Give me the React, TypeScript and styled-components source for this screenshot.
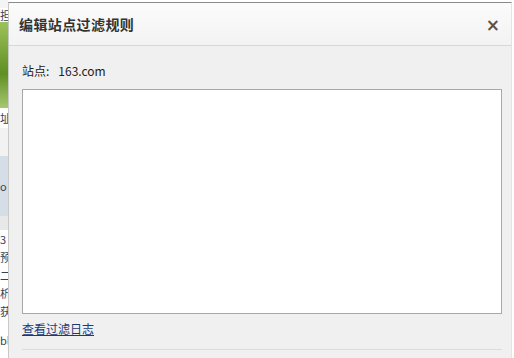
import React from "react";
import styled, { createGlobalStyle } from "styled-components";

const Global = createGlobalStyle`
  html, body { margin: 0; padding: 0; background: #ffffff; }
  body { width: 514px; height: 358px; overflow: hidden; font-family: "Noto Sans CJK SC", "Liberation Sans", sans-serif; }
`;

const Page = styled.div`
  display: flex;
  width: 514px;
  height: 358px;
  overflow: hidden;
`;

const Backdrop = styled.div`
  width: 8px;
  flex: none;
  display: flex;
  flex-direction: column;
  background: #ffffff;
`;

const BgBlock = styled.div<{ $h: number; $bg: string }>`
  flex: none;
  height: ${(p) => p.$h}px;
  background: ${(p) => p.$bg};
  font-size: 11px;
  line-height: ${(p) => p.$h}px;
  color: #345;
  overflow: hidden;
  white-space: nowrap;
`;

const Dialog = styled.div`
  width: 504px;
  margin-top: 2px;
  display: flex;
  flex-direction: column;
  background: #f0f0f0;
  border-top: 1px solid #8a8a8a;
  border-left: 1px solid #c8c8c8;
  border-right: 1px solid #e4e4e4;
  box-sizing: border-box;
`;

const Header = styled.div`
  flex: none;
  height: 43px;
  display: flex;
  align-items: center;
  justify-content: space-between;
  padding: 0 11px 0 10px;
  background: linear-gradient(#fbfbfb, #f3f3f3);
  border-bottom: 1px solid #d6d6d6;
  box-sizing: border-box;
`;

const Title = styled.div`
  font-size: 14px;
  font-weight: bold;
  color: #333;
  letter-spacing: 0.4px;
  margin-top: -1px;
`;

const Close = styled.div`
  font-family: "DejaVu Sans", sans-serif;
  font-size: 17px;
  font-weight: bold;
  color: #555;
  line-height: 1;
  margin-top: 2px;
`;

const Body = styled.div`
  flex: 1;
  min-height: 0;
  display: flex;
  flex-direction: column;
  padding: 15px 9px 0 13px;
`;

const SiteRow = styled.div`
  flex: none;
  font-size: 12px;
  color: #222;
  height: 20px;
  line-height: 20px;
  display: flex;
  gap: 9px;
`;

const Area = styled.div`
  flex: none;
  margin-top: 8px;
  height: 225px;
  background: #ffffff;
  border: 1px solid #a8a8a8;
  box-sizing: border-box;
`;

const Link = styled.a`
  flex: none;
  margin-top: 6px;
  font-size: 12px;
  color: #1a3b78;
  text-decoration: underline;
  height: 18px;
  line-height: 18px;
  align-self: flex-start;
`;

const Footer = styled.div`
  margin-top: 11px;
  border-top: 1px solid #dcdcdc;
  flex: 1;
  background: #f0f0f0;
`;

export default function App() {
  return (
    <>
      <Global />
      <Page>
        <Backdrop>
          <BgBlock $h={8} $bg="#f4f4f4" />
          <BgBlock $h={14} $bg="#ffffff">担</BgBlock>
          <BgBlock $h={86} $bg="linear-gradient(#9cc35a,#5f8f22 60%,#a6c870)" />
          <BgBlock $h={20} $bg="#ffffff">址</BgBlock>
          <BgBlock $h={28} $bg="#f2f2f2" />
          <BgBlock $h={60} $bg="#d5dde6">o</BgBlock>
          <BgBlock $h={14} $bg="#e8e8e8" />
          <BgBlock $h={18} $bg="#ffffff">3</BgBlock>
          <BgBlock $h={18} $bg="#ffffff">预</BgBlock>
          <BgBlock $h={18} $bg="#ffffff">二</BgBlock>
          <BgBlock $h={18} $bg="#ffffff">析</BgBlock>
          <BgBlock $h={18} $bg="#ffffff">获</BgBlock>
          <BgBlock $h={40} $bg="#ffffff">bl</BgBlock>
        </Backdrop>
        <Dialog>
          <Header>
            <Title>编辑站点过滤规则</Title>
            <Close>×</Close>
          </Header>
          <Body>
            <SiteRow>
              <span>站点:</span>
              <span>163.com</span>
            </SiteRow>
            <Area />
            <Link href="#">查看过滤日志</Link>
            <Footer />
          </Body>
        </Dialog>
      </Page>
    </>
  );
}
